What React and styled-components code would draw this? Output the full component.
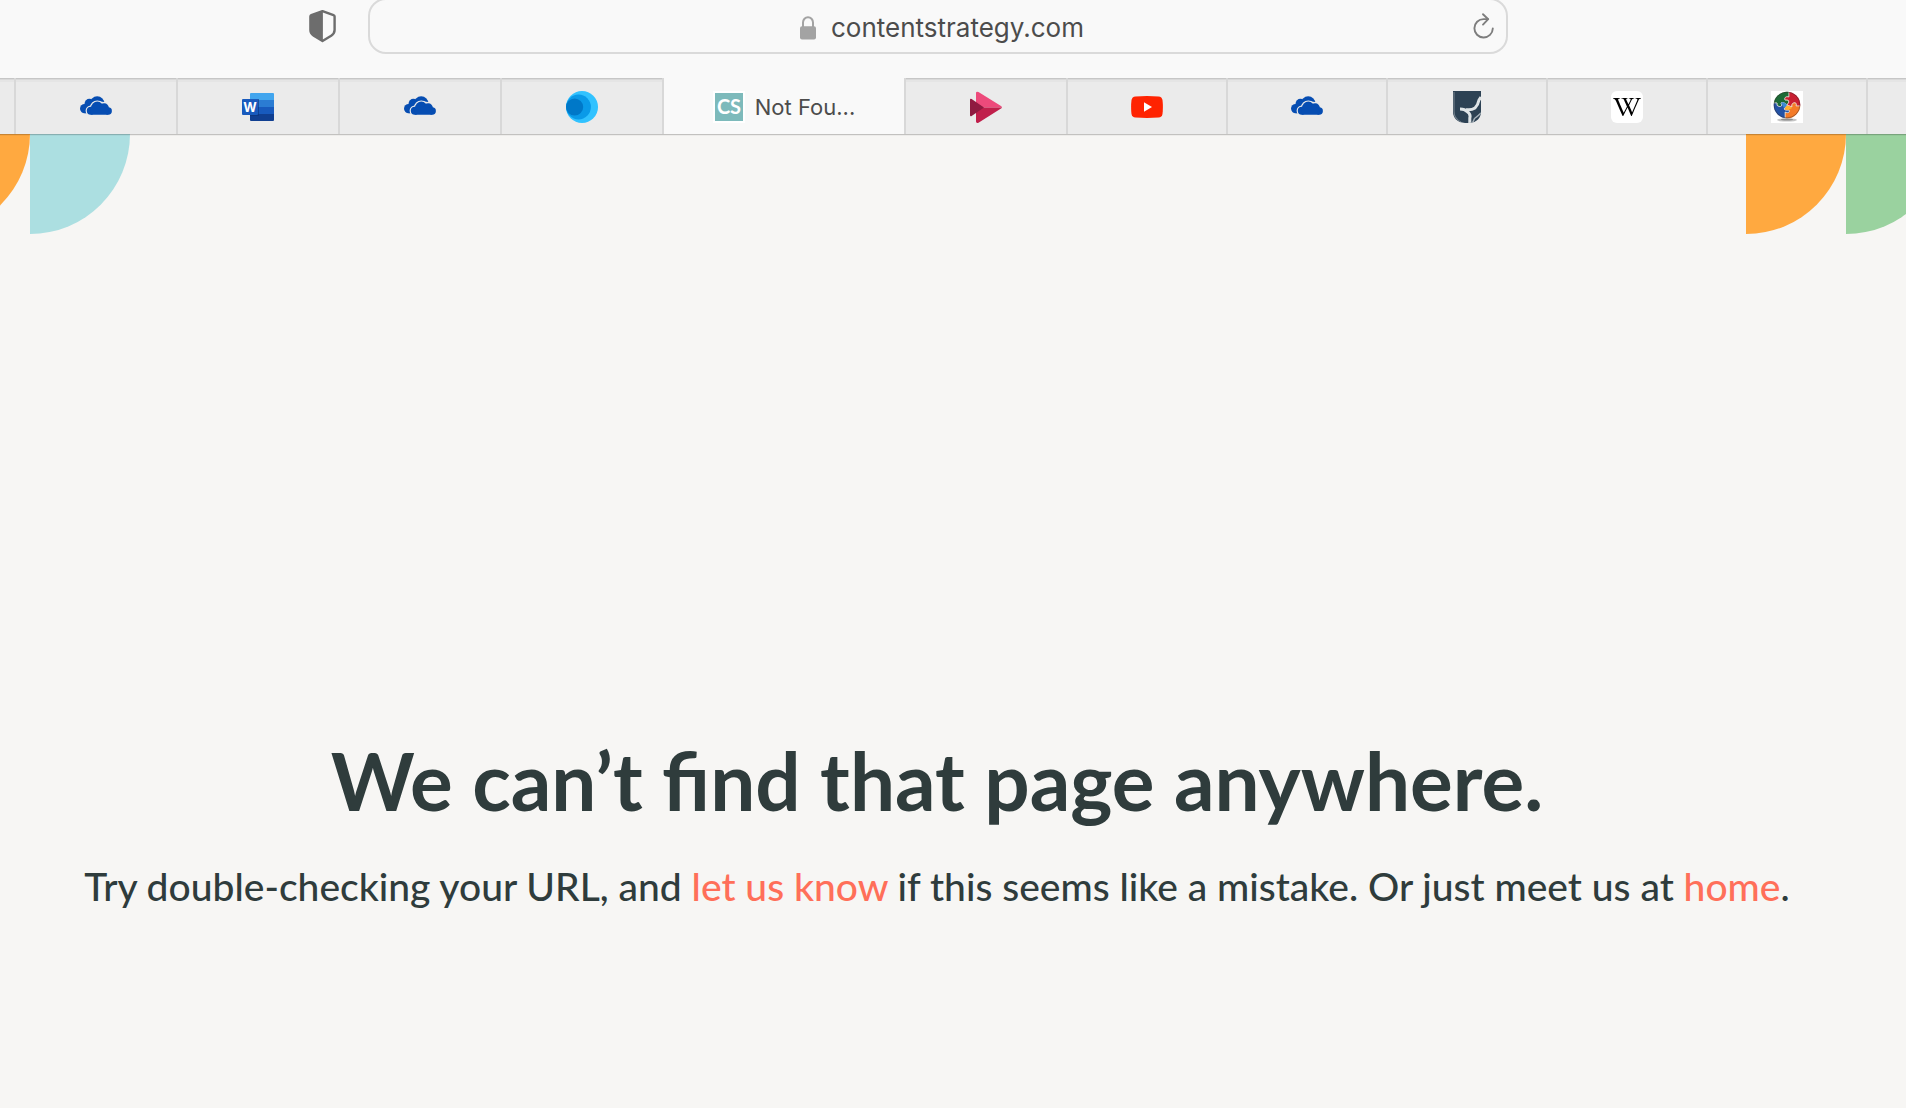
import React from "react";
import styled, { createGlobalStyle, css } from "styled-components";
import { FaWikipediaW } from "react-icons/fa";

const GlobalStyle = createGlobalStyle`
  *, *::before, *::after { box-sizing: border-box; }
  html, body { margin: 0; background: #f7f6f4; }
  body { font-family: Inter, Roboto, sans-serif; }
  button, input { font: inherit; color: inherit; border: 0; padding: 0; margin: 0; background: none; }
`;

const Window = styled.div`
  display: flex;
  flex-direction: column;
  min-height: 100vh;
  overflow: hidden;
`;

const Toolbar = styled.header`
  display: grid;
  grid-template-columns: minmax(0, 368fr) minmax(0, 1140fr) minmax(0, 398fr);
  align-items: start;
  height: 78px;
  background: #f9f9f9;
`;

const ToolbarSide = styled.div`
  display: flex;
  justify-content: flex-end;
  padding: 8px 32px 0 0;
`;

const IconButton = styled.button`
  display: grid;
  place-items: center;
  width: ${(p) => p.$width}px;
  height: 36px;
`;

const AddressBar = styled.form`
  display: grid;
  grid-template-columns: 32px 1fr 32px;
  align-items: center;
  height: 56px;
  margin-top: -2px;
  padding: 0 6px;
  border: 2px solid #dadada;
  border-radius: 18px;
`;

const AddressLabel = styled.label`
  grid-column: 2;
  display: flex;
  align-items: center;
  justify-content: center;
  gap: 15px;
  padding: 4px 0 0 8px;
`;

const AddressInput = styled.input`
  field-sizing: content;
  width: auto;
  height: 36px;
  font-size: 26px;
  line-height: 36px;
  color: #4c4c4c;
  outline: none;
`;

const TabStrip = styled.nav`
  position: relative;
  display: grid;
  grid-template-columns:
    minmax(0, 16fr) repeat(4, minmax(0, 162fr)) minmax(0, 242fr)
    minmax(0, 162fr) repeat(5, minmax(0, 160fr)) minmax(0, 38fr);
  height: 56px;
  background: #ebebeb;
  box-shadow: 0 1px 0 rgba(0, 0, 0, 0.18), 0 2px 0 rgba(0, 0, 0, 0.04);
`;

const Tab = styled.button`
  display: flex;
  align-items: center;
  justify-content: center;
  gap: 10px;
  min-width: 0;
  padding-top: 2px;
  overflow: hidden;
  border-right: 2px solid #d8d8d8;
  font-size: 22px;
  line-height: 28px;
  color: #4c4c4c;
  white-space: nowrap;
  ${(p) =>
    p.$active
      ? css`
          background: #f9f9f9;
        `
      : css`
          box-shadow: inset 0 1px 0 #c6c6c6, inset 0 2px 0 #d9d9d9,
            inset 0 4px 0 #e5e5e5;
        `}
  &:last-child {
    border-right: 0;
  }
`;

const FavIcon = styled.svg`
  flex: none;
  display: block;
  width: 32px;
  height: 32px;
`;

const WikiTile = styled.span`
  display: grid;
  place-items: center;
  width: 32px;
  height: 32px;
  border-radius: 6px;
  background: #fff;
  color: #000;
  font-size: 28px;
`;

const Page = styled.main`
  flex: 1;
  display: flex;
  flex-direction: column;
`;

const Pattern = styled.div`
  display: flex;
  justify-content: space-between;
`;

const PatternEdge = styled.div`
  display: flex;
  justify-content: ${(p) => (p.$side === "left" ? "flex-end" : "flex-start")};
  width: ${(p) => p.$width}px;
  overflow: hidden;
`;

const Quarter = styled.div`
  flex: none;
  width: 100px;
  height: 100px;
  border-bottom-right-radius: 100px;
  background: ${(p) => p.$color};
`;

const Message = styled.section`
  padding: 498px 32px 0 0;
  font-family: Lato, sans-serif;
  color: #2f3c3c;
  text-align: center;
`;

const Title = styled.h1`
  margin: 0;
  font-size: 80px;
  line-height: 96px;
  font-weight: 700;
`;

const Lead = styled.p`
  margin: 28px 0 0;
  font-size: 39px;
  line-height: 60px;
  font-weight: 500;
`;

const Link = styled.a`
  color: #ff6f59;
  text-decoration: none;
`;

function PrivacyShield() {
  return (
    <svg width="28" height="34" viewBox="0 0 28 34" aria-hidden="true">
      <path
        d="M14.500 2.100 L25.500 6.200 Q26.600 6.600 26.600 7.600 V21 Q26.600 24.400 23.200 26.800 L14.500 32 L5.800 26.800 Q2.400 24.400 2.400 21 V7.600 Q2.400 6.600 3.300 6.200 Z"
        fill="none" stroke="#6d6d6d" strokeWidth="2.4" strokeLinejoin="round"
      />
      <path d="M14.900 1.500 L2.600 6 V22 Q3.200 25 6.200 27 L14.900 32 Z" fill="#6d6d6d" />
    </svg>
  );
}

function Lock() {
  return (
    <svg width="16" height="24" viewBox="0 0 16 24" aria-hidden="true">
      <path d="M3 11 V6.5 a5 5.3 0 0 1 10 0 V11" fill="none" stroke="#a3a3a3" strokeWidth="2" />
      <rect x="0" y="10.2" width="16" height="13.3" rx="2" fill="#a3a3a3" />
    </svg>
  );
}

function Reload() {
  return (
    <svg width="22" height="28" viewBox="0 0 22 28" fill="none" stroke="#7e7e7e" strokeWidth="1.9" strokeLinecap="round" strokeLinejoin="round" aria-hidden="true">
      <path d="M19.800 16.500 A9.200 9.200 0 1 1 10.600 7.100 H15" />
      <path d="M10 2.200 L15.200 7.200 L10 12.600" />
    </svg>
  );
}

function OneDrive() {
  return (
    <FavIcon viewBox="0 0 32 32" aria-hidden="true">
      <g fill="#064db2">
        <circle cx="4.7" cy="17.6" r="4.7" />
        <circle cx="9.4" cy="12.6" r="4.8" />
        <circle cx="17.2" cy="12.6" r="7.3" />
        <path d="M5 13 h8 v9.3 h-8.300 z" />
      </g>
      <path d="M20 14 L28 13 V8 L24.5 11 L20 10.500 Z" fill="#ebebeb" />
      <g fill="#ebebeb" stroke="#ebebeb" strokeWidth="2.4">
        <circle cx="10.8" cy="19.700" r="4" />
        <circle cx="17.3" cy="16.8" r="6.2" />
        <circle cx="24.2" cy="17" r="4.700" />
        <path d="M11 18 h16 v5.700 h-16 z" />
      </g>
      <g fill="#064db2">
        <circle cx="10.8" cy="19.700" r="4" />
        <circle cx="17.3" cy="16.8" r="6.2" />
        <circle cx="24.2" cy="17" r="4.700" />
        <circle cx="28.200" cy="20" r="3.700" />
        <path d="M10.8 16 h14 l3.400 3 v4.700 h-17.400 z" />
      </g>
    </FavIcon>
  );
}

function Word() {
  return (
    <FavIcon viewBox="0 0 32 32" aria-hidden="true">
      <path d="M8 3 a1 1 0 0 1 1-1 H31 a1 1 0 0 1 1 1 V9 H8 Z" fill="#41a5ee" />
      <path d="M8 9 H32 V16 H8 Z" fill="#2b7cd3" />
      <path d="M8 16 H32 V23 H8 Z" fill="#185abd" />
      <path d="M8 23 H32 V29 a1 1 0 0 1-1 1 H9 a1 1 0 0 1-1-1 Z" fill="#103f91" />
      <path d="M8 8 H17 V25 H8 Z" fill="#0c3277" opacity=".6" />
      <rect x="0" y="8" width="16" height="16" rx="1" fill="#185abd" />
      <text x="8" y="20.500" textAnchor="middle" fontFamily="Inter, sans-serif" fontWeight="700" fontSize="13" fill="#fff">W</text>
    </FavIcon>
  );
}

function BlueCircles() {
  return (
    <FavIcon viewBox="0 0 32 32" aria-hidden="true">
      <circle cx="16" cy="16" r="16" fill="#31c2ff" />
      <circle cx="12.500" cy="16" r="12.400" fill="#0a9ae8" />
      <circle cx="8.600" cy="16" r="8.600" fill="#0078c8" />
    </FavIcon>
  );
}

function ContentStrategy() {
  return (
    <FavIcon viewBox="0 0 32 32" aria-hidden="true">
      <rect width="32" height="32" fill="#fff" />
      <rect x="2" y="2" width="28" height="28" fill="#7dbabb" />
      <text x="16" y="23" textAnchor="middle" fontFamily="Lato, sans-serif" fontWeight="700" fontSize="20" fill="#fff">CS</text>
    </FavIcon>
  );
}

function Stream() {
  return (
    <FavIcon viewBox="0 0 32 32" aria-hidden="true">
      <path d="M6 2 Q6 0 8.500 1 L31 15 Q32 15.500 32 16.500 H6 Z" fill="#ed4a7b" />
      <path d="M6 16.500 H32 Q32 17 31 17.600 L8.500 31.700 Q6 32.500 6 30.500 Z" fill="#c01f4b" />
      <path d="M0 9 Q0 7.300 1.600 8 L14 16.500 L1.600 25 Q0 25.700 0 24 Z" fill="#8f1a40" />
    </FavIcon>
  );
}

function YouTube() {
  return (
    <FavIcon viewBox="0 0 32 32" aria-hidden="true">
      <path d="M4.500 5.400 Q16 4.700 27.500 5.400 Q31 5.700 31.500 9 Q32.300 16 31.500 23 Q31 26.300 27.500 26.600 Q16 27.300 4.500 26.600 Q1 26.300 .5 23 Q-.3 16 .5 9 Q1 5.700 4.500 5.400 Z" fill="#ff2301" />
      <path d="M13 11.300 L21 16 L13 20.700 Z" fill="#fff" />
    </FavIcon>
  );
}

function RiverShield() {
  return (
    <FavIcon viewBox="0 0 32 32" aria-hidden="true">
      <defs>
        <clipPath id="crest"><path d="M2 0 H30 V20 Q30 31 18 32 H14 Q2 31 2 20 Z" /></clipPath>
      </defs>
      <g clipPath="url(#crest)" fill="none" strokeLinejoin="round">
        <path d="M2 0 H30 V32 H2 Z" fill="#2d4254" />
        <path d="M3 1 V20 Q3 28 10 31" stroke="#6d7c88" strokeWidth="1.200" />
        <path d="M30 6 L28 9 Q27 14 24 17 Q20 19.500 15 18.500" stroke="#dfe4e6" strokeWidth="3" />
        <path d="M9 18 Q14 18 16 20.500 Q20 23 18.800 27 V33" stroke="#dfe4e6" strokeWidth="3" />
        <path d="M30 22 Q27 25 23.500 27.500 L21 33" stroke="#a5b0b8" strokeWidth="1.500" />
      </g>
    </FavIcon>
  );
}

function Puzzle() {
  return (
    <FavIcon viewBox="0 0 32 32" aria-hidden="true">
      <defs>
        <clipPath id="ball"><circle cx="16" cy="14" r="13.300" /></clipPath>
      </defs>
      <rect width="32" height="32" fill="#fff" />
      <ellipse cx="16" cy="29" rx="10" ry="1.600" fill="#c4c4c4" />
      <ellipse cx="16" cy="28.500" rx="6" ry="1" fill="#8f8f8f" />
      <g clipPath="url(#ball)" stroke="#eee9df" strokeWidth=".6">
        <path d="M2 0 H18 V6 Q13 5 14 9 Q18 8 18 11 L16 14 Q12 10 10 12 Q12 16 8 15.500 Q5 15 6 12 H2 Z" fill="#1c6b36" />
        <path d="M18 0 H30 V15 H25 Q26 11 22.500 12 Q20 13 21 16 L16 14 L18 11 Q18 8 14 9 Q13 5 18 6 Z" fill="#c91f32" />
        <path d="M30 15 V28 H14 V21 Q19 23 18 19 Q14 20 13 18 L16 14 L21 16 Q20 13 22.500 12 Q26 11 25 15 Z" fill="#f47b28" />
        <path d="M2 12 H6 Q5 15 8 15.500 Q12 16 10 12 Q12 10 16 14 L13 18 Q14 20 18 19 Q19 23 14 21 V28 H2 Z" fill="#2453a6" />
      </g>
      <path d="M14 18 Q15 14 18 15 L21 17 L17 19 Z" fill="#ffb32e" />
      <path d="M10 12 Q13 10 16 14 L13 17 Z" fill="#3b8dd2" />
      <circle cx="16" cy="14" r="12.900" fill="none" stroke="#3a2a2a" strokeWidth=".7" opacity=".6" />
    </FavIcon>
  );
}

function Wikipedia() {
  return (
    <WikiTile>
      <FaWikipediaW aria-hidden="true" />
    </WikiTile>
  );
}

const tabs = [
  { label: "Previous tab" },
  { label: "OneDrive", Icon: OneDrive },
  { label: "Word", Icon: Word },
  { label: "OneDrive", Icon: OneDrive },
  { label: "Meetings", Icon: BlueCircles },
  { label: "Not Found", Icon: ContentStrategy, title: "Not Fou..." },
  { label: "Stream", Icon: Stream },
  { label: "YouTube", Icon: YouTube },
  { label: "OneDrive", Icon: OneDrive },
  { label: "River shield", Icon: RiverShield },
  { label: "Wikipedia", Icon: Wikipedia },
  { label: "Puzzle", Icon: Puzzle },
  { label: "Next tab" },
];

export default function App() {
  return (
    <Window>
      <GlobalStyle />
      <Toolbar>
        <ToolbarSide>
          <IconButton type="button" $width={28} aria-label="Privacy report">
            <PrivacyShield />
          </IconButton>
        </ToolbarSide>
        <AddressBar onSubmit={(e) => e.preventDefault()}>
          <AddressLabel>
            <Lock />
            <AddressInput type="text" aria-label="Address" defaultValue="contentstrategy.com" spellCheck={false} />
          </AddressLabel>
          <IconButton type="button" $width={32} aria-label="Reload">
            <Reload />
          </IconButton>
        </AddressBar>
      </Toolbar>
      <TabStrip aria-label="Open tabs">
        {tabs.map(({ label, Icon, title }, i) => (
          <Tab key={i} type="button" $active={Boolean(title)} aria-label={title ? undefined : label}>
            {Icon && <Icon />}
            {title}
          </Tab>
        ))}
      </TabStrip>
      <Page>
        <Pattern>
          <PatternEdge $side="left" $width={130}>
            <Quarter $color="#ffa940" />
            <Quarter $color="#acdfe1" />
          </PatternEdge>
          <PatternEdge $side="right" $width={160}>
            <Quarter $color="#ffa940" />
            <Quarter $color="#9ad29f" />
          </PatternEdge>
        </Pattern>
        <Message>
          <Title>We can’t find that page anywhere.</Title>
          <Lead>
            Try double-checking your URL, and <Link href="#contact">let us know</Link> if this seems like a mistake. Or just meet us at <Link href="#home">home</Link>.
          </Lead>
        </Message>
      </Page>
    </Window>
  );
}
